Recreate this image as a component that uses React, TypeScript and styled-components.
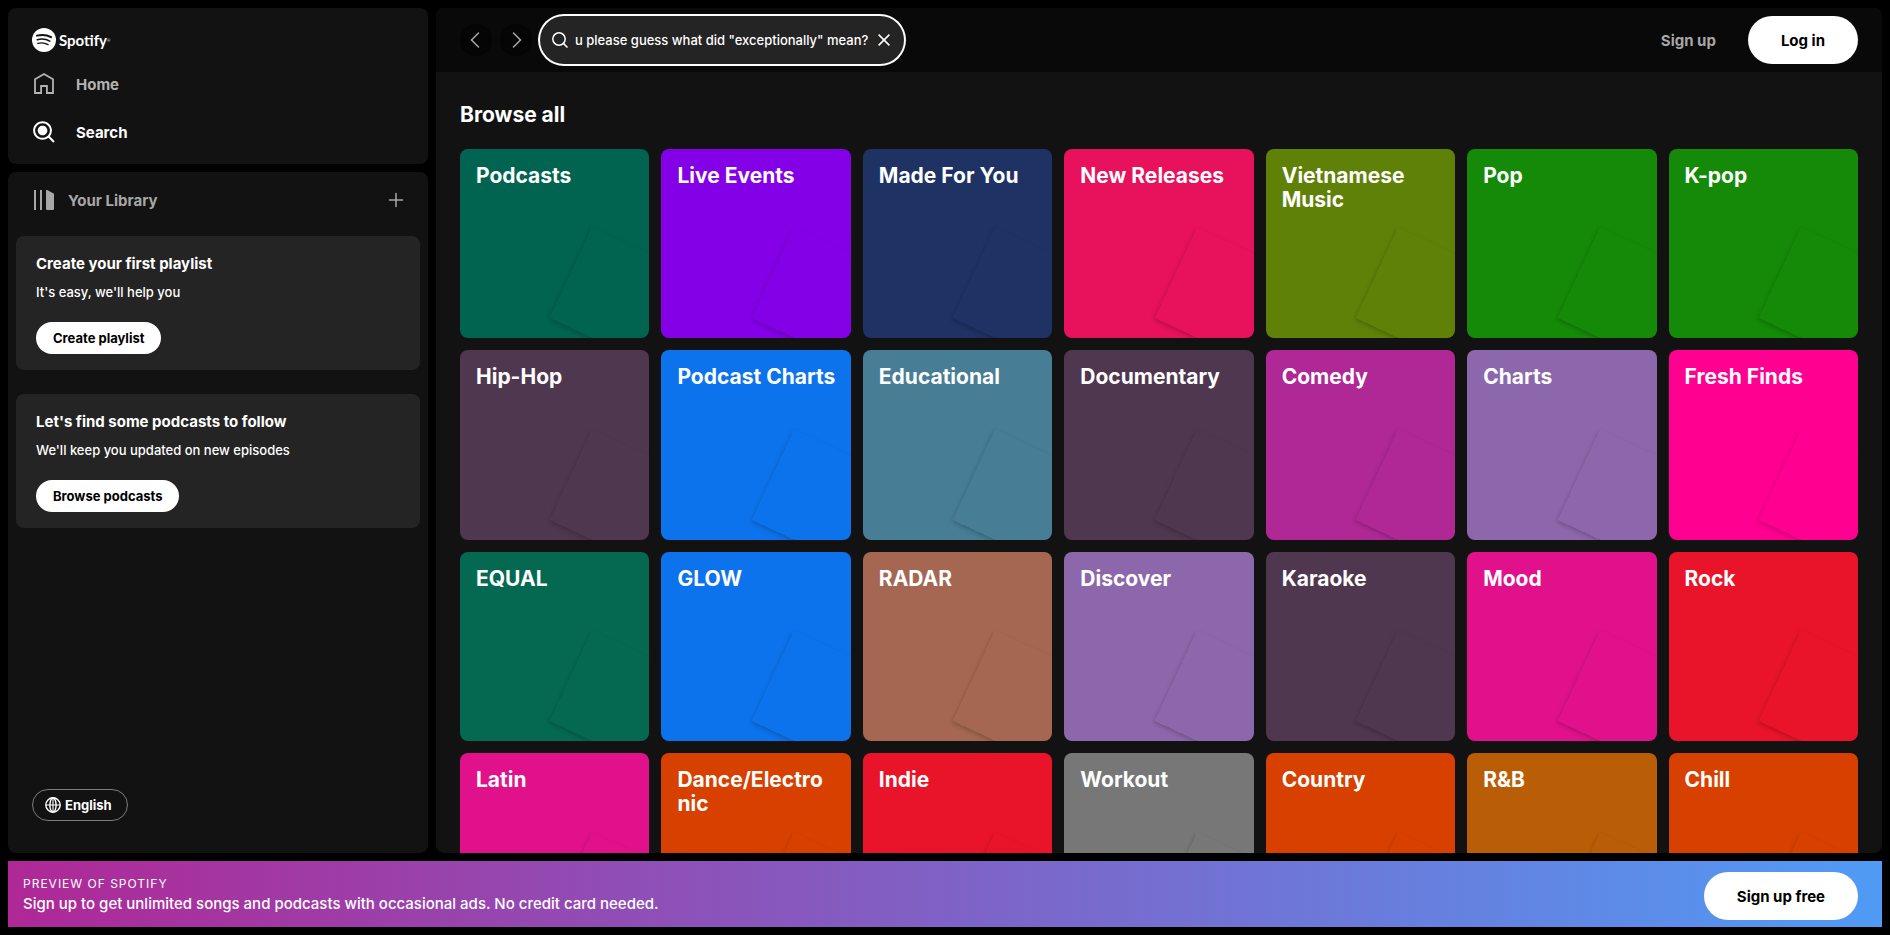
import React, { Fragment, useState } from "react";
import styled, { createGlobalStyle } from "styled-components";

const GlobalStyle = createGlobalStyle`
  *, *::before, *::after { box-sizing: border-box; }
  body {
    margin: 0;
    background: #000;
    color: #fff;
    font-family: Inter, "Liberation Sans", sans-serif;
    font-size: 15px;
  }
  h2, h3, p, ul { margin: 0; padding: 0; }
  ul { list-style: none; }
  a { color: inherit; text-decoration: none; }
  button, input { font-family: inherit; }
  button { cursor: pointer; }
  svg { display: block; flex: none; }
`;

const Shell = styled.div`
  display: grid;
  grid-template-columns: 420px minmax(0, 1fr);
  grid-template-rows: minmax(0, 1fr) auto;
  gap: 8px;
  height: 100vh;
  padding: 8px;
`;

const Sidebar = styled.nav`
  display: flex;
  flex-direction: column;
  gap: 8px;
  min-height: 0;
`;

const NavPanel = styled.div`
  padding: 20px 24px 12px;
  border-radius: 8px;
  background: #121212;
`;

const Logo = styled.a`
  display: flex;
  align-items: center;
  gap: 3px;
  width: max-content;
  height: 24px;
  margin-bottom: 12px;
`;

const Wordmark = styled.span`
  font: 700 15px/20px Lato, sans-serif;
`;

const TradeMark = styled.sup`
  font-size: 4px;
  line-height: 4px;
  vertical-align: 4px;
  font-weight: 400;
`;

const NavList = styled.ul`
  display: flex;
  flex-direction: column;
  gap: 8px;
`;

const NavLink = styled.a<{ $active?: boolean }>`
  display: flex;
  align-items: center;
  gap: 20px;
  height: 40px;
  color: ${(p) => (p.$active ? "#fff" : "#b3b3b3")};
  font-weight: 700;
`;

const LibraryPanel = styled.div`
  display: flex;
  flex: 1;
  flex-direction: column;
  min-height: 0;
  padding: 8px 8px 32px;
  border-radius: 8px;
  background: #121212;
`;

const LibraryHeader = styled.div`
  display: flex;
  align-items: center;
  justify-content: space-between;
  height: 40px;
  margin-bottom: 16px;
  padding: 0 8px 0 16px;
`;

const LibraryButton = styled.button`
  display: flex;
  align-items: center;
  gap: 12px;
  padding: 0;
  border: 0;
  background: none;
  color: #a7a7a7;
  font-size: 15px;
  font-weight: 700;
`;

const AddButton = styled.button`
  display: grid;
  place-items: center;
  width: 32px;
  height: 32px;
  padding: 0;
  border: 0;
  border-radius: 50%;
  background: none;
  color: #a7a7a7;
`;

const Prompts = styled.div`
  display: flex;
  flex-direction: column;
  gap: 24px;
`;

const Prompt = styled.section`
  padding: 16px 20px;
  border-radius: 8px;
  background: #242424;
`;

const PromptTitle = styled.h3`
  font-size: 15px;
  line-height: 24px;
  font-weight: 700;
`;

const PromptText = styled.p`
  margin: 8px 0 22px;
  font-size: 13px;
  line-height: 16px;
  font-weight: 500;
`;

const Pill = styled.button<{ $large?: boolean }>`
  height: ${(p) => (p.$large ? 48 : 32)}px;
  padding: 0 ${(p) => (p.$large ? 33 : 17)}px;
  border: 0;
  border-radius: 24px;
  background: #fff;
  color: #000;
  font-size: ${(p) => (p.$large ? 15 : 13)}px;
  font-weight: 700;
  white-space: nowrap;
`;

const LanguageButton = styled.button`
  display: flex;
  align-items: center;
  gap: 4px;
  width: max-content;
  height: 32px;
  margin: auto 0 0 16px;
  padding: 0 15px 0 12px;
  border: 1px solid #7c7c7c;
  border-radius: 16px;
  background: none;
  color: #fff;
  font-size: 13px;
  font-weight: 700;
`;

const Main = styled.main`
  display: flex;
  flex-direction: column;
  min-height: 0;
  overflow: hidden;
  border-radius: 8px;
  background: #121212;
`;

const TopBar = styled.header`
  display: flex;
  flex: none;
  align-items: center;
  gap: 8px;
  height: 64px;
  padding: 0 24px;
  background: #090909;
`;

const HistoryButton = styled.button`
  display: grid;
  place-items: center;
  width: 32px;
  height: 32px;
  padding: 0;
  border: 0;
  border-radius: 50%;
  background: #050505;
  color: #a7a7a7;
`;

const SearchField = styled.label`
  display: flex;
  align-items: center;
  width: 364px;
  height: 48px;
  padding: 0 8px 0 12px;
  border-radius: 24px;
  background: #242424;
  box-shadow: 0 0 0 2px #fff;
`;

const SearchInput = styled.input`
  flex: 1;
  min-width: 0;
  margin-left: 7px;
  padding: 0;
  border: 0;
  outline: 0;
  background: none;
  color: #fff;
  font-size: 13px;
  font-weight: 500;
`;

const ClearButton = styled.button`
  display: grid;
  place-items: center;
  width: 24px;
  height: 24px;
  padding: 0;
  border: 0;
  background: none;
  color: #fff;
`;

const Account = styled.div`
  display: flex;
  align-items: center;
  gap: 32px;
  margin-left: auto;
`;

const SignUpButton = styled.button`
  padding: 0;
  border: 0;
  background: none;
  color: #a7a7a7;
  font-size: 15px;
  font-weight: 700;
`;

const Browse = styled.section`
  flex: 1;
  min-height: 0;
  overflow: hidden;
  padding: 29px 24px 0;
`;

const BrowseTitle = styled.h2`
  margin-bottom: 20px;
  font-size: 21px;
  line-height: 28px;
  font-weight: 700;
`;

const CardGrid = styled.div`
  display: grid;
  grid-template-columns: repeat(7, minmax(0, 1fr));
  gap: 12px;
`;

const Card = styled.a<{ $color: string }>`
  position: relative;
  aspect-ratio: 1;
  overflow: hidden;
  padding: 15px 12px 15px 16px;
  border-radius: 8px;
  background: ${(p) => p.$color};

  &::after {
    content: "";
    position: absolute;
    right: 0;
    bottom: 0;
    width: 100px;
    height: 100px;
    transform: rotate(25deg) translate(18%, -2%);
    box-shadow: 0 2px 4px rgba(0, 0, 0, 0.2);
  }
`;

const CardTitle = styled.h3`
  font-size: 21px;
  line-height: 24px;
  font-weight: 700;
  overflow-wrap: break-word;
`;

const Banner = styled.aside`
  display: flex;
  grid-column: 1 / -1;
  align-items: center;
  justify-content: space-between;
  padding: 11px 24px 7px 15px;
  background: linear-gradient(90deg, #af2896, #509bf5);
`;

const BannerCopy = styled.div`
  padding-bottom: 2px;
`;

const BannerLabel = styled.p`
  font-size: 12px;
  line-height: 18px;
  letter-spacing: 1px;
  text-transform: uppercase;
`;

const BannerText = styled.p`
  font-size: 15px;
  line-height: 22px;
  font-weight: 500;
`;

const LogoMark = () => (
  <svg width="24" height="24" viewBox="0 0 24 24" aria-hidden="true">
    <circle cx="12" cy="12" r="12" fill="#fff" />
    <g fill="none" stroke="#121212" strokeLinecap="round">
      <path d="M4.900 7.700c4.900-1.300 10.100-.8 14.200 1.500" strokeWidth="1.900" />
      <path d="M5.300 11.700c4.300-1.200 8.900-.7 12.500 1.400" strokeWidth="1.600" />
      <path d="M5.800 15.300c3.700-.9 7.200-.5 10.300 1.300" strokeWidth="1.300" />
    </g>
  </svg>
);

const HomeIcon = () => (
  <svg width="24" height="24" viewBox="0 0 24 24" fill="none" stroke="currentColor" strokeWidth="1.800" aria-hidden="true">
    <path d="M3 7.200 12 2l9 5.200V21h-6.100v-7H9.100v7H3z" />
  </svg>
);

const SearchActiveIcon = () => (
  <svg width="24" height="24" viewBox="0 0 24 24" fill="currentColor" aria-hidden="true">
    <path d="M15.356 10.558c0 2.623-2.160 4.750-4.823 4.750-2.664 0-4.824-2.127-4.824-4.750s2.160-4.750 4.824-4.750c2.664 0 4.823 2.127 4.823 4.750z" />
    <path d="M1.126 10.558c0-5.140 4.226-9.280 9.407-9.280 5.180 0 9.407 4.140 9.407 9.280a9.157 9.157 0 0 1-2.077 5.816l4.344 4.344a1 1 0 0 1-1.414 1.414l-4.353-4.353a9.454 9.454 0 0 1-5.907 2.058c-5.180 0-9.407-4.140-9.407-9.280zm9.407-7.280c-4.105 0-7.407 3.274-7.407 7.280s3.302 7.279 7.407 7.279 7.407-3.273 7.407-7.280c0-4.005-3.302-7.278-7.407-7.278z" />
  </svg>
);

const LibraryIcon = () => (
  <svg width="24" height="24" viewBox="0 0 24 24" fill="currentColor" aria-hidden="true">
    <path d="M2 2h2v20H2zM8 2h2v20H8zM14 2h1.300L22 5.700V21a1 1 0 0 1-1 1h-6a1 1 0 0 1-1-1z" />
  </svg>
);

const PlusIcon = () => (
  <svg width="16" height="16" viewBox="0 0 16 16" fill="currentColor" aria-hidden="true">
    <path d="M15.250 8a.75.75 0 0 1-.75.75H8.750v5.750a.75.75 0 0 1-1.500 0V8.750H1.500a.75.75 0 0 1 0-1.500h5.750V1.500a.75.75 0 0 1 1.500 0v5.750h5.750a.75.75 0 0 1 .75.75z" />
  </svg>
);

const GlobeIcon = () => (
  <svg width="16" height="16" viewBox="0 0 16 16" fill="none" stroke="currentColor" strokeWidth="1.400" aria-hidden="true">
    <circle cx="8" cy="8" r="7.200" />
    <ellipse cx="8" cy="8" rx="3.100" ry="7.200" />
    <path d="M.8 8h14.400M8 .8v14.400" strokeWidth="1.100" />
  </svg>
);

const ChevronIcon = ({ right }: { right?: boolean }) => (
  <svg width="16" height="16" viewBox="0 0 16 16" fill="currentColor" aria-hidden="true">
    <path
      d={
        right
          ? "M4.970.47a.75.75 0 0 0 0 1.060L11.440 8l-6.470 6.470a.75.75 0 1 0 1.060 1.060L13.560 8 6.030.47a.75.75 0 0 0-1.060 0z"
          : "M11.030.47a.75.75 0 0 1 0 1.060L4.560 8l6.470 6.470a.75.75 0 1 1-1.060 1.060L2.440 8 9.970.47a.75.75 0 0 1 1.060 0z"
      }
    />
  </svg>
);

const SearchIcon = () => (
  <svg width="16" height="16" viewBox="0 0 16 16" fill="none" stroke="currentColor" strokeWidth="1.500" aria-hidden="true">
    <circle cx="7" cy="7" r="6.200" />
    <path d="m11.400 11.400 4.100 4.100" />
  </svg>
);

const CloseIcon = () => (
  <svg width="12" height="12" viewBox="0 0 12 12" fill="none" stroke="currentColor" strokeWidth="1.500" aria-hidden="true">
    <path d="m.6.6 10.800 10.800M11.400.6.6 11.400" />
  </svg>
);

// A "|" in a name marks where a long word may break.
const categories: [string, string][] = [
  ["Podcasts", "#006450"],
  ["Live Events", "#8400e7"],
  ["Made For You", "#1e3264"],
  ["New Releases", "#e8115b"],
  ["Vietnamese Music", "#608108"],
  ["Pop", "#148a08"],
  ["K-pop", "#148a08"],
  ["Hip-Hop", "#503750"],
  ["Podcast Charts", "#0d73ec"],
  ["Educational", "#477d95"],
  ["Documentary", "#503750"],
  ["Comedy", "#af2896"],
  ["Charts", "#8d67ab"],
  ["Fresh Finds", "#ff0090"],
  ["EQUAL", "#056952"],
  ["GLOW", "#0d73ec"],
  ["RADAR", "#a56752"],
  ["Discover", "#8d67ab"],
  ["Karaoke", "#503750"],
  ["Mood", "#e1118c"],
  ["Rock", "#e91429"],
  ["Latin", "#e1118c"],
  ["Dance/Electro|nic", "#d84000"],
  ["Indie", "#e91429"],
  ["Workout", "#777777"],
  ["Country", "#d84000"],
  ["R&B", "#ba5d07"],
  ["Chill", "#d84000"],
];

export default function App() {
  const [query, setQuery] = useState('u please guess what did "exceptionally" mean?');

  return (
    <>
      <GlobalStyle />
      <Shell>
        <Sidebar aria-label="Main">
          <NavPanel>
            <Logo href="#">
              <LogoMark />
              <Wordmark>
                Spotify<TradeMark>®</TradeMark>
              </Wordmark>
            </Logo>
            <NavList>
              <li>
                <NavLink href="#home">
                  <HomeIcon />
                  Home
                </NavLink>
              </li>
              <li>
                <NavLink href="#search" $active aria-current="page">
                  <SearchActiveIcon />
                  Search
                </NavLink>
              </li>
            </NavList>
          </NavPanel>
          <LibraryPanel>
            <LibraryHeader>
              <LibraryButton>
                <LibraryIcon />
                Your Library
              </LibraryButton>
              <AddButton aria-label="Create playlist or folder">
                <PlusIcon />
              </AddButton>
            </LibraryHeader>
            <Prompts>
              <Prompt>
                <PromptTitle>Create your first playlist</PromptTitle>
                <PromptText>It's easy, we'll help you</PromptText>
                <Pill>Create playlist</Pill>
              </Prompt>
              <Prompt>
                <PromptTitle>Let's find some podcasts to follow</PromptTitle>
                <PromptText>We'll keep you updated on new episodes</PromptText>
                <Pill>Browse podcasts</Pill>
              </Prompt>
            </Prompts>
            <LanguageButton>
              <GlobeIcon />
              English
            </LanguageButton>
          </LibraryPanel>
        </Sidebar>

        <Main>
          <TopBar>
            <HistoryButton aria-label="Go back">
              <ChevronIcon />
            </HistoryButton>
            <HistoryButton aria-label="Go forward">
              <ChevronIcon right />
            </HistoryButton>
            <SearchField>
              <SearchIcon />
              <SearchInput
                aria-label="Search"
                value={query}
                onChange={(e) => setQuery(e.target.value)}
              />
              <ClearButton aria-label="Clear search" onClick={() => setQuery("")}>
                <CloseIcon />
              </ClearButton>
            </SearchField>
            <Account>
              <SignUpButton>Sign up</SignUpButton>
              <Pill $large>Log in</Pill>
            </Account>
          </TopBar>
          <Browse>
            <BrowseTitle>Browse all</BrowseTitle>
            <CardGrid>
              {categories.map(([name, color]) => (
                <Card key={name} href="#genre" $color={color}>
                  <CardTitle>
                    {name.split("|").map((part, i) => (
                      <Fragment key={part}>
                        {i > 0 && <wbr />}
                        {part}
                      </Fragment>
                    ))}
                  </CardTitle>
                </Card>
              ))}
            </CardGrid>
          </Browse>
        </Main>

        <Banner>
          <BannerCopy>
            <BannerLabel>Preview of Spotify</BannerLabel>
            <BannerText>
              Sign up to get unlimited songs and podcasts with occasional ads. No credit card needed.
            </BannerText>
          </BannerCopy>
          <Pill $large>Sign up free</Pill>
        </Banner>
      </Shell>
    </>
  );
}
